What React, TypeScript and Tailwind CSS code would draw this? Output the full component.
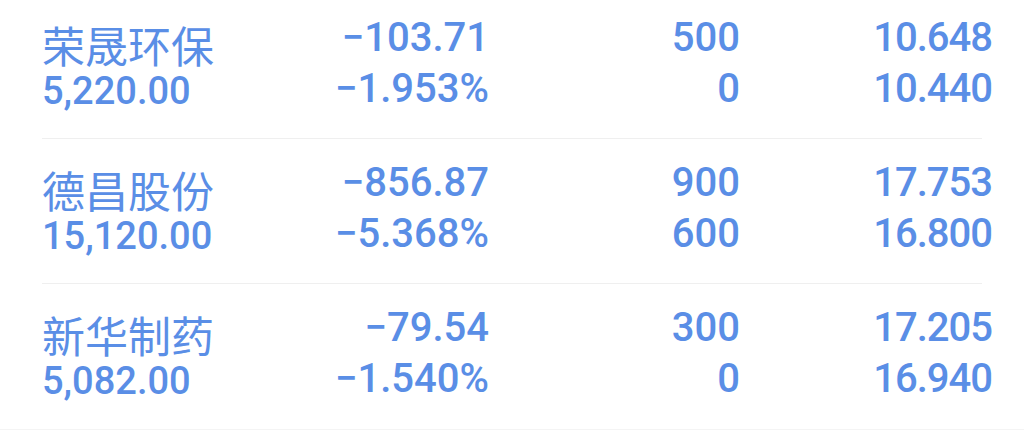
const rows = [
  { name: "荣晟环保", amount: "5,220.00", change: "−103.71", pct: "−1.953%", qty: "500", avail: "0", cost: "10.648", price: "10.440" },
  { name: "德昌股份", amount: "15,120.00", change: "−856.87", pct: "−5.368%", qty: "900", avail: "600", cost: "17.753", price: "16.800" },
  { name: "新华制药", amount: "5,082.00", change: "−79.54", pct: "−1.540%", qty: "300", avail: "0", cost: "17.205", price: "16.940" },
];

const num = "font-['Roboto',sans-serif] font-medium text-[40px] leading-[51px]";

export default function App() {
  return (
    <div className="h-[430px] w-[1024px] overflow-hidden bg-white text-[#5a8ee6]">
      <div className="-mt-[6px] flex flex-col">
        {rows.map((row, i) => (
          <div key={row.name} className="flex h-[145px] flex-col">
            <div className="flex flex-1 pl-[42px] pr-[32px] pt-[18px]">
              <div className="flex flex-1 flex-col pt-[9px]">
                <span className="font-['Noto_Sans_CJK_SC',sans-serif] text-[43px] leading-[46px]">{row.name}</span>
                <span className="mt-[3px] font-['Roboto',sans-serif] font-medium text-[38px] leading-[42px]">{row.amount}</span>
              </div>
              <div className="flex w-[200px] flex-col items-end">
                <span className={num}>{row.change}</span>
                <span className={num}>{row.pct}</span>
              </div>
              <div className="flex w-[251px] flex-col items-end">
                <span className={num}>{row.qty}</span>
                <span className={num}>{row.avail}</span>
              </div>
              <div className="flex w-[252px] flex-col items-end">
                <span className={`${num} tracking-[-1px]`}>{row.cost}</span>
                <span className={`${num} tracking-[-1px]`}>{row.price}</span>
              </div>
            </div>
            {i < rows.length - 1 ? (
              <div className="ml-[42px] mr-[42px] h-px bg-[#efefef]" />
            ) : null}
          </div>
        ))}
      </div>
      <div className="h-[8px] bg-[#f4f4f4]" />
    </div>
  );
}
